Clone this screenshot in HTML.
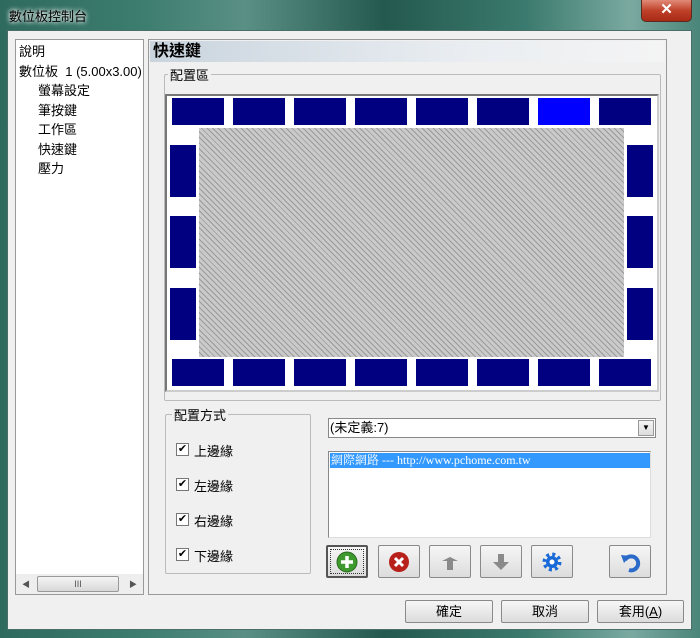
<!DOCTYPE html>
<html><head><meta charset="utf-8"><style>
*{margin:0;padding:0;box-sizing:border-box}
body{width:700px;height:638px;overflow:hidden;font-family:"Liberation Sans","Noto Sans CJK TC",sans-serif;font-size:13px;color:#000;position:relative;background:#2a5a52}
.a{position:absolute}
.tb{left:0;top:0;width:700px;height:638px;background:linear-gradient(90deg,#2f6a5e,#3c7d6f 20%,#5a8f85 35%,#24594f 55%,#3b7a6e 75%,#7aa9a0 90%,#4a8579)}
.client{left:7px;top:30px;width:685px;height:600px;background:#f0f0f0;border:1px solid #4a6e68}
.blk{position:absolute;background:#000080}
.btn{position:absolute;background:linear-gradient(#f6f6f6,#dcdcdc);border:1px solid #8a8a8a;border-radius:2px;text-align:center}
.cb{position:absolute;width:13px;height:13px;border:1px solid #777;background:#fff;font-size:11px;line-height:11px;text-align:center}
</style></head><body>
<div class="a tb"></div>
<div class="a" style="left:9px;top:6px;color:#000;font-size:13px;text-shadow:0 0 6px #fff,0 0 4px #fff">數位板控制台</div>
<div class="a" style="left:641px;top:0;width:51px;height:22px;background:linear-gradient(#e08a78,#c0412a 50%,#a82a15);border:1px solid #5a2a20;border-top:none;border-radius:0 0 5px 5px;color:#fff;font-weight:bold;text-align:center;font-size:15px;line-height:20px">✕</div>
<div class="a client"></div>
<!-- tree -->
<div class="a" style="left:15px;top:39px;width:129px;height:556px;background:#fff;border:1px solid #999;overflow:hidden">
<div style="position:absolute;left:3px;top:2px;line-height:19.5px;white-space:nowrap">說明<br>數位板&nbsp; 1 (5.00x3.00)<br><span style="padding-left:19px">螢幕設定</span><br><span style="padding-left:19px">筆按鍵</span><br><span style="padding-left:19px">工作區</span><br><span style="padding-left:19px">快速鍵</span><br><span style="padding-left:19px">壓力</span></div>
<div style="position:absolute;left:0;top:534px;width:127px;height:20px;background:#eee">
<div style="position:absolute;left:21px;top:2px;width:82px;height:16px;background:linear-gradient(#f4f4f4,#d8d8d8);border:1px solid #999;border-radius:2px;font-size:9px;text-align:center;line-height:14px;color:#555">III</div>
<div style="position:absolute;left:6px;top:5px;font-size:8px;color:#555">◀</div>
<div style="position:absolute;left:113px;top:5px;font-size:8px;color:#555">▶</div></div>
</div>
<!-- right panel -->
<div class="a" style="left:148px;top:39px;width:519px;height:556px;border:1px solid #999;background:#f0f0f0"></div>
<div class="a" style="left:150px;top:41px;width:515px;height:21px;background:linear-gradient(90deg,#c9d4de,#e9edf1 60%,#f4f4f4);font-weight:bold;font-size:16px;line-height:21px;padding-left:3px">快速鍵</div>
<div class="a" style="left:164px;top:74px;width:497px;height:327px;border:1px solid #bbb;border-radius:2px"></div>
<div class="a" style="left:168px;top:65px;background:#f0f0f0;padding:0 2px">配置區</div>
<div class="a" style="left:165px;top:94px;width:494px;height:298px;background:#fff;border:2px solid #777;border-right-color:#ccc;border-bottom-color:#ccc"></div>
<div class="a" style="left:199px;top:128px;width:425px;height:229px;background:repeating-linear-gradient(45deg,#cacaca 0 3px,#9a9a9a 3px 4px)"></div>
<div class="blk" style="left:172px;top:98px;width:52px;height:27px"></div>
<div class="blk" style="left:233px;top:98px;width:52px;height:27px"></div>
<div class="blk" style="left:294px;top:98px;width:52px;height:27px"></div>
<div class="blk" style="left:355px;top:98px;width:52px;height:27px"></div>
<div class="blk" style="left:416px;top:98px;width:52px;height:27px"></div>
<div class="blk" style="left:477px;top:98px;width:52px;height:27px"></div>
<div class="blk" style="left:538px;top:98px;width:52px;height:27px;background:#0000ff"></div>
<div class="blk" style="left:599px;top:98px;width:52px;height:27px"></div>
<div class="blk" style="left:172px;top:359px;width:52px;height:27px"></div>
<div class="blk" style="left:233px;top:359px;width:52px;height:27px"></div>
<div class="blk" style="left:294px;top:359px;width:52px;height:27px"></div>
<div class="blk" style="left:355px;top:359px;width:52px;height:27px"></div>
<div class="blk" style="left:416px;top:359px;width:52px;height:27px"></div>
<div class="blk" style="left:477px;top:359px;width:52px;height:27px"></div>
<div class="blk" style="left:538px;top:359px;width:52px;height:27px"></div>
<div class="blk" style="left:599px;top:359px;width:52px;height:27px"></div>
<div class="blk" style="left:170px;top:145px;width:26px;height:52px"></div>
<div class="blk" style="left:170px;top:216px;width:26px;height:52px"></div>
<div class="blk" style="left:170px;top:288px;width:26px;height:52px"></div>
<div class="blk" style="left:627px;top:145px;width:26px;height:52px"></div>
<div class="blk" style="left:627px;top:216px;width:26px;height:52px"></div>
<div class="blk" style="left:627px;top:288px;width:26px;height:52px"></div>
<!-- 配置方式 -->
<div class="a" style="left:165px;top:414px;width:146px;height:160px;border:1px solid #bbb;border-radius:2px"></div>
<div class="a" style="left:172px;top:405px;background:#f0f0f0;padding:0 2px">配置方式</div>
<div class="cb" style="left:176px;top:443px">✔</div><div class="a" style="left:194px;top:441px">上邊緣</div>
<div class="cb" style="left:176px;top:478px">✔</div><div class="a" style="left:194px;top:476px">左邊緣</div>
<div class="cb" style="left:176px;top:513px">✔</div><div class="a" style="left:194px;top:511px">右邊緣</div>
<div class="cb" style="left:176px;top:548px">✔</div><div class="a" style="left:194px;top:546px">下邊緣</div>
<!-- combo -->
<div class="a" style="left:328px;top:418px;width:328px;height:20px;background:#fff;border:1px solid #888;padding-left:1px;line-height:17px">(未定義:7)
<div style="position:absolute;right:1px;top:1px;width:16px;height:16px;background:linear-gradient(#f4f4f4,#ddd);border:1px solid #999;font-size:8px;line-height:14px;text-align:center">▼</div></div>
<div class="a" style="left:328px;top:451px;width:323px;height:87px;background:#fff;border:1px solid #888;border-right-color:#ddd;border-bottom-color:#ddd">
<div style="margin:1px 0 0 1px;height:15px;background:#3399ff;color:#fff;font-family:'Liberation Serif','Noto Serif CJK SC',serif;font-size:12px;line-height:15px;padding-left:1px">網際網路 --- http://www.pchome.com.tw</div></div>
<!-- tool buttons -->
<div class="btn" style="left:326px;top:545px;width:42px;height:33px;border:2px solid #555;outline:1px dotted #333;outline-offset:-5px"><svg width="22" height="22" style="margin-top:4px" viewBox="0 0 22 22"><circle cx="11" cy="11" r="10" fill="#3e9a2e" stroke="#2a6a1e"/><path d="M11 5v12M5 11h12" stroke="#fff" stroke-width="3.5"/></svg></div>
<div class="btn" style="left:378px;top:545px;width:42px;height:33px"><svg width="22" height="22" style="margin-top:5px" viewBox="0 0 22 22"><circle cx="11" cy="11" r="10" fill="#b8201a"/><path d="M7 7l8 8M15 7l-8 8" stroke="#fff" stroke-width="3"/></svg></div>
<div class="btn" style="left:429px;top:545px;width:42px;height:33px"><svg width="22" height="22" style="margin-top:5px" viewBox="0 0 22 22"><path d="M3 10l8-4 8 4h-5v9h-6v-9z" fill="#8a8a8a"/></svg></div>
<div class="btn" style="left:480px;top:545px;width:42px;height:33px"><svg width="22" height="22" style="margin-top:5px" viewBox="0 0 22 22"><path d="M8 3h6v8h5l-8 8-8-8h5z" fill="#8a8a8a"/></svg></div>
<div class="btn" style="left:531px;top:545px;width:42px;height:33px"><svg width="22" height="22" style="margin-top:5px" viewBox="0 0 22 22"><circle cx="11" cy="11" r="7" fill="none" stroke="#1a6ad8" stroke-width="5" stroke-dasharray="2.7 2.8"/><circle cx="11" cy="11" r="6" fill="#1a6ad8"/><circle cx="11" cy="11" r="2.5" fill="#fff"/></svg></div>
<div class="btn" style="left:609px;top:545px;width:42px;height:33px"><svg width="22" height="22" style="margin-top:5px" viewBox="0 0 22 22"><path d="M6 9a7 7 0 1 1 4 10" fill="none" stroke="#2a6ac8" stroke-width="4"/><path d="M2 4l9 1-6 7z" fill="#2a6ac8"/></svg></div>
<!-- bottom buttons -->
<div class="btn" style="left:405px;top:600px;width:88px;height:23px;line-height:21px">確定</div>
<div class="btn" style="left:501px;top:600px;width:88px;height:23px;line-height:21px">取消</div>
<div class="btn" style="left:597px;top:600px;width:87px;height:23px;line-height:21px">套用(<u>A</u>)</div>
</body></html>
